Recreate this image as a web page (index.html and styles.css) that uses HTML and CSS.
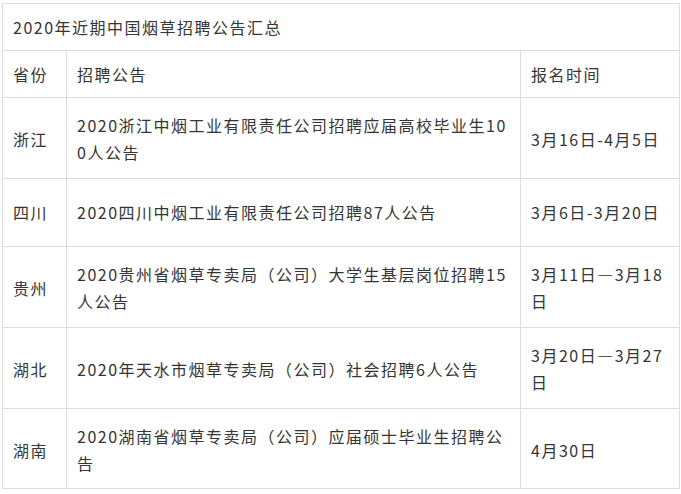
FILE: index.html
```html
<!DOCTYPE html>
<html lang="zh-CN">
<head>
<meta charset="utf-8">
<title>2020年近期中国烟草招聘公告汇总</title>
<link rel="stylesheet" href="styles.css">
</head>
<body>
<div class="wrap">
<table class="recruit">
  <colgroup>
    <col class="c-prov">
    <col class="c-notice">
    <col class="c-date">
  </colgroup>
  <tbody>
    <tr class="row-title"><td colspan="3">2020年近期中国烟草招聘公告汇总</td></tr>
    <tr class="row-head"><td>省份</td><td>招聘公告</td><td>报名时间</td></tr>
    <tr class="row-data"><td>浙江</td><td>2020浙江中烟工业有限责任公司招聘应届高校毕业生100人公告</td><td>3月16日-4月5日</td></tr>
    <tr class="row-data row-mid"><td>四川</td><td>2020四川中烟工业有限责任公司招聘87人公告</td><td>3月6日-3月20日</td></tr>
    <tr class="row-data"><td>贵州</td><td>2020贵州省烟草专卖局（公司）大学生基层岗位招聘15人公告</td><td>3月11日—3月18日</td></tr>
    <tr class="row-data"><td>湖北</td><td>2020年天水市烟草专卖局（公司）社会招聘6人公告</td><td>3月20日—3月27日</td></tr>
    <tr class="row-data row-last"><td>湖南</td><td>2020湖南省烟草专卖局（公司）应届硕士毕业生招聘公告</td><td>4月30日</td></tr>
  </tbody>
</table>
</div>
</body>
</html>
```
FILE: styles.css
```css
html, body {
  margin: 0;
  padding: 0;
  background: #ffffff;
}

.wrap {
  padding: 3px 2px 0 2px;
}

.recruit {
  width: 677px;
  border-collapse: collapse;
  table-layout: fixed;
  font-family: "Noto Sans CJK SC", "Noto Sans", sans-serif;
  font-size: 16px;
  line-height: 27px;
  letter-spacing: 1.5px;
  color: #353535;
}

.c-prov { width: 64px; }
.c-notice { width: 454px; }
.c-date { width: 159px; }

.recruit td {
  border: 1px solid #dddddd;
  padding: 10px 10px;
  vertical-align: middle;
  word-break: break-all;
}

.row-title td,
.row-head td {
  height: 26px;
  padding-top: 10px;
  padding-bottom: 9px;
}

.row-data td {
  padding-top: 14px;
  padding-bottom: 12px;
  height: 54px;
}

.row-data.row-mid td {
  height: 47px;
  padding-top: 10px;
  padding-bottom: 10px;
}

.row-data.row-last td {
  padding-bottom: 11px;
}
```
